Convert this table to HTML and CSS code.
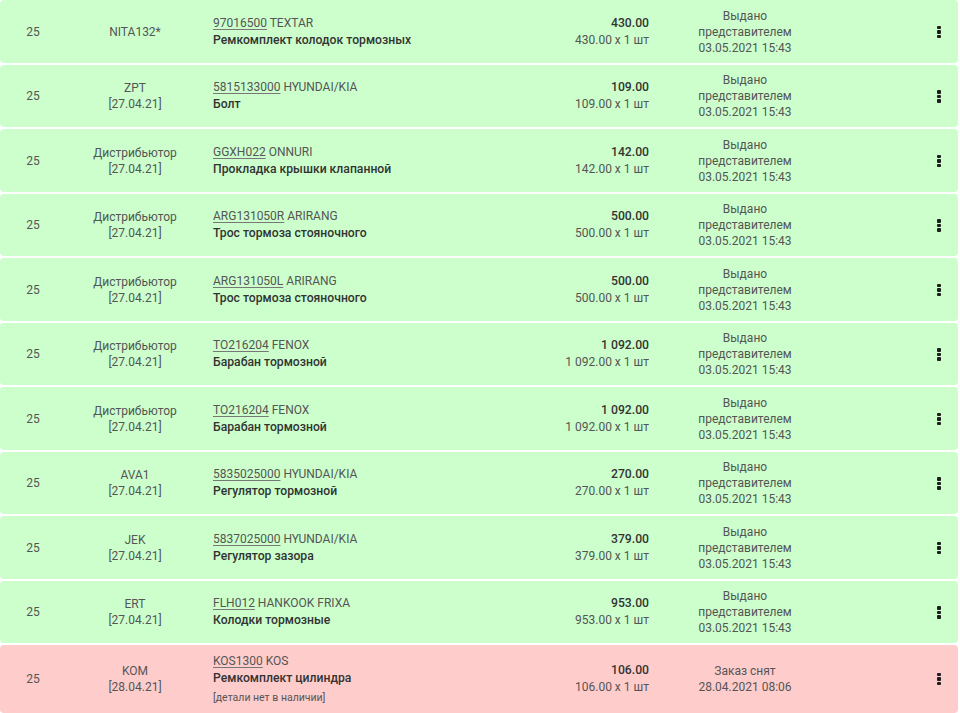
FILE: index.html
```html
<!DOCTYPE html>
<html lang="ru">
<head>
<meta charset="utf-8">
<title>Заказы</title>
<link rel="stylesheet" href="styles.css">
</head>
<body>
<div class="list">

  <div class="row done">
    <div class="qty">25</div>
    <div class="sup">NITA132*</div>
    <div class="desc"><div class="code"><a href="#">97016500</a> TEXTAR</div><div class="name">Ремкомплект колодок тормозных</div></div>
    <div class="price"><div class="sum">430.00</div><div class="calc">430.00 x 1 шт</div></div>
    <div class="status"><div class="st">Выдано представителем</div><div>03.05.2021 15:43</div></div>
    <div class="menu"><span class="kebab"><i></i><i></i><i></i></span></div>
  </div>

  <div class="row done">
    <div class="qty">25</div>
    <div class="sup">ZPT<br>[27.04.21]</div>
    <div class="desc"><div class="code"><a href="#">5815133000</a> HYUNDAI/KIA</div><div class="name">Болт</div></div>
    <div class="price"><div class="sum">109.00</div><div class="calc">109.00 x 1 шт</div></div>
    <div class="status"><div class="st">Выдано представителем</div><div>03.05.2021 15:43</div></div>
    <div class="menu"><span class="kebab"><i></i><i></i><i></i></span></div>
  </div>

  <div class="row done">
    <div class="qty">25</div>
    <div class="sup">Дистрибьютор<br>[27.04.21]</div>
    <div class="desc"><div class="code"><a href="#">GGXH022</a> ONNURI</div><div class="name">Прокладка крышки клапанной</div></div>
    <div class="price"><div class="sum">142.00</div><div class="calc">142.00 x 1 шт</div></div>
    <div class="status"><div class="st">Выдано представителем</div><div>03.05.2021 15:43</div></div>
    <div class="menu"><span class="kebab"><i></i><i></i><i></i></span></div>
  </div>

  <div class="row done">
    <div class="qty">25</div>
    <div class="sup">Дистрибьютор<br>[27.04.21]</div>
    <div class="desc"><div class="code"><a href="#">ARG131050R</a> ARIRANG</div><div class="name">Трос тормоза стояночного</div></div>
    <div class="price"><div class="sum">500.00</div><div class="calc">500.00 x 1 шт</div></div>
    <div class="status"><div class="st">Выдано представителем</div><div>03.05.2021 15:43</div></div>
    <div class="menu"><span class="kebab"><i></i><i></i><i></i></span></div>
  </div>

  <div class="row done">
    <div class="qty">25</div>
    <div class="sup">Дистрибьютор<br>[27.04.21]</div>
    <div class="desc"><div class="code"><a href="#">ARG131050L</a> ARIRANG</div><div class="name">Трос тормоза стояночного</div></div>
    <div class="price"><div class="sum">500.00</div><div class="calc">500.00 x 1 шт</div></div>
    <div class="status"><div class="st">Выдано представителем</div><div>03.05.2021 15:43</div></div>
    <div class="menu"><span class="kebab"><i></i><i></i><i></i></span></div>
  </div>

  <div class="row done">
    <div class="qty">25</div>
    <div class="sup">Дистрибьютор<br>[27.04.21]</div>
    <div class="desc"><div class="code"><a href="#">TO216204</a> FENOX</div><div class="name">Барабан тормозной</div></div>
    <div class="price"><div class="sum">1 092.00</div><div class="calc">1 092.00 x 1 шт</div></div>
    <div class="status"><div class="st">Выдано представителем</div><div>03.05.2021 15:43</div></div>
    <div class="menu"><span class="kebab"><i></i><i></i><i></i></span></div>
  </div>

  <div class="row done">
    <div class="qty">25</div>
    <div class="sup">Дистрибьютор<br>[27.04.21]</div>
    <div class="desc"><div class="code"><a href="#">TO216204</a> FENOX</div><div class="name">Барабан тормозной</div></div>
    <div class="price"><div class="sum">1 092.00</div><div class="calc">1 092.00 x 1 шт</div></div>
    <div class="status"><div class="st">Выдано представителем</div><div>03.05.2021 15:43</div></div>
    <div class="menu"><span class="kebab"><i></i><i></i><i></i></span></div>
  </div>

  <div class="row done">
    <div class="qty">25</div>
    <div class="sup">AVA1<br>[27.04.21]</div>
    <div class="desc"><div class="code"><a href="#">5835025000</a> HYUNDAI/KIA</div><div class="name">Регулятор тормозной</div></div>
    <div class="price"><div class="sum">270.00</div><div class="calc">270.00 x 1 шт</div></div>
    <div class="status"><div class="st">Выдано представителем</div><div>03.05.2021 15:43</div></div>
    <div class="menu"><span class="kebab"><i></i><i></i><i></i></span></div>
  </div>

  <div class="row done">
    <div class="qty">25</div>
    <div class="sup">JEK<br>[27.04.21]</div>
    <div class="desc"><div class="code"><a href="#">5837025000</a> HYUNDAI/KIA</div><div class="name">Регулятор зазора</div></div>
    <div class="price"><div class="sum">379.00</div><div class="calc">379.00 x 1 шт</div></div>
    <div class="status"><div class="st">Выдано представителем</div><div>03.05.2021 15:43</div></div>
    <div class="menu"><span class="kebab"><i></i><i></i><i></i></span></div>
  </div>

  <div class="row done">
    <div class="qty">25</div>
    <div class="sup">ERT<br>[27.04.21]</div>
    <div class="desc"><div class="code"><a href="#">FLH012</a> HANKOOK FRIXA</div><div class="name">Колодки тормозные</div></div>
    <div class="price"><div class="sum">953.00</div><div class="calc">953.00 x 1 шт</div></div>
    <div class="status"><div class="st">Выдано представителем</div><div>03.05.2021 15:43</div></div>
    <div class="menu"><span class="kebab"><i></i><i></i><i></i></span></div>
  </div>

  <div class="row cancel">
    <div class="qty">25</div>
    <div class="sup">KOM<br>[28.04.21]</div>
    <div class="desc"><div class="code"><a href="#">KOS1300</a> KOS</div><div class="name">Ремкомплект цилиндра</div><div class="note">[детали нет в наличии]</div></div>
    <div class="price"><div class="sum">106.00</div><div class="calc">106.00 x 1 шт</div></div>
    <div class="status"><div>Заказ снят</div><div>28.04.2021 08:06</div></div>
    <div class="menu"><span class="kebab"><i></i><i></i><i></i></span></div>
  </div>

</div>
</body>
</html>
```

FILE: styles.css
```css
html, body {
  margin: 0;
  padding: 0;
  background: #ffffff;
}

body {
  font-family: Roboto, "Noto Sans", "Liberation Sans", sans-serif;
  font-size: 12px;
  color: #555555;
}

.list {
  width: 958px;
  display: flex;
  flex-direction: column;
  gap: 2px;
}

.row {
  display: grid;
  grid-template-columns: 66px 138px 316px 129px 192px 117px;
  align-items: center;
  min-height: 62.5px;
  box-sizing: border-box;
  border-radius: 4px;
  line-height: 16px;
}

.row.done {
  background: #ccffcc;
  padding-top: 1px;
}

.row.cancel {
  background: #ffcccc;
  min-height: 68px;
}

.qty {
  text-align: center;
}

.sup {
  text-align: center;
}

.desc {
  padding-left: 9px;
  line-height: 17px;
}

.code a {
  color: #555555;
  text-decoration: underline;
  text-decoration-color: #777777;
  text-underline-offset: 2px;
}

.name {
  color: #333333;
  font-weight: 500;
  font-size: 12.2px;
}

.note {
  font-size: 10.5px;
  margin-top: 2px;
}

.price {
  text-align: right;
  line-height: 17px;
}

.sum {
  color: #333333;
  font-weight: 500;
  font-size: 12.2px;
}

.status {
  text-align: center;
}

.status .st {
  max-width: 110px;
  margin: 0 auto;
}

.menu {
  display: flex;
  justify-content: flex-end;
  padding-right: 17px;
}

.kebab {
  display: flex;
  flex-direction: column;
  gap: 1px;
}

.kebab i {
  display: block;
  width: 4px;
  height: 3.5px;
  border-radius: 1px;
  background: #1e1e1e;
}
```
